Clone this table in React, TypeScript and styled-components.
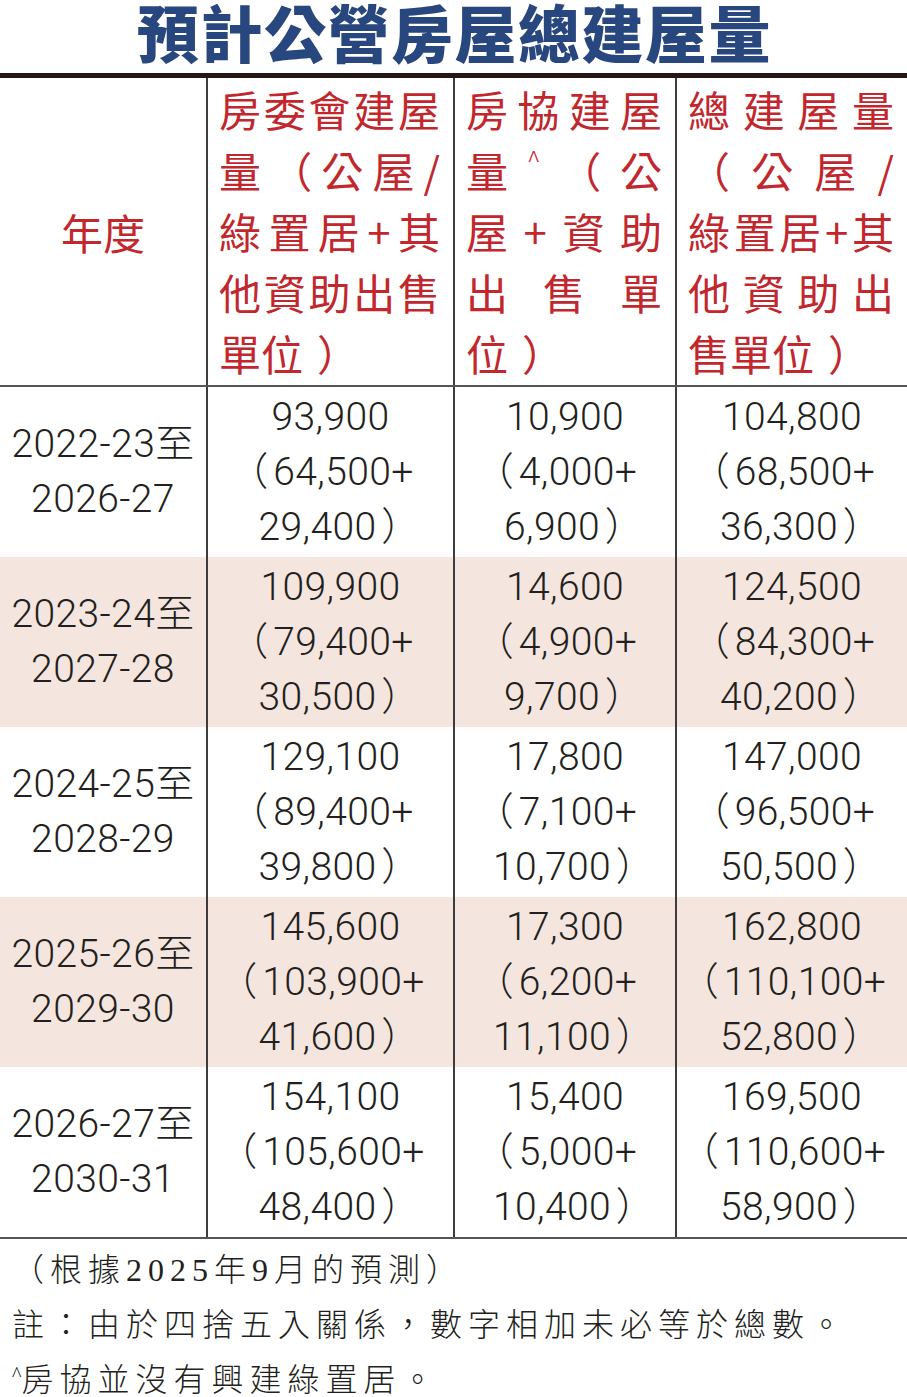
import React from "react";
import styled, { createGlobalStyle } from "styled-components";

const GlobalStyle = createGlobalStyle`
  html, body { margin: 0; padding: 0; background: #ffffff; }
  body { font-family: "Noto Sans CJK TC", "Noto Sans CJK SC", sans-serif; }
`;

const Page = styled.div`
  width: 907px;
  background: #ffffff;
`;

const Title = styled.h1`
  margin: 0;
  height: 73px;
  box-sizing: border-box;
  padding: 0 0 11px 2px;
  text-align: center;
  font-family: "Noto Sans CJK TC", "Noto Sans CJK SC", sans-serif;
  font-weight: 900;
  font-size: 62px;
  line-height: 62px;
  letter-spacing: 1.5px;
  color: #28477f;
  white-space: nowrap;
`;

const Rule = styled.div`
  height: 5px;
  background: #231815;
`;

const Table = styled.div`
  border-bottom: 2px solid #555555;
`;

const Row = styled.div<{ $shaded?: boolean; $head?: boolean }>`
  display: grid;
  grid-template-columns: 206px 247px 222px 1fr;
  box-sizing: border-box;
  height: ${(p) => (p.$head ? "309px" : "170px")};
  border-bottom: ${(p) => (p.$head ? "2px solid #555555" : "none")};
  background: ${(p) => (p.$shaded ? "#f4e6de" : "transparent")};
`;

const Cell = styled.div<{ $first?: boolean }>`
  box-sizing: border-box;
  border-left: ${(p) => (p.$first ? "none" : "2px solid #3d3d3d")};
  display: flex;
  flex-direction: column;
  justify-content: center;
  align-items: center;
`;

const HeadCell = styled.div<{ $first?: boolean }>`
  box-sizing: border-box;
  border-left: ${(p) => (p.$first ? "none" : "2px solid #3d3d3d")};
  display: flex;
  flex-direction: column;
  justify-content: ${(p) => (p.$first ? "center" : "flex-start")};
  align-items: ${(p) => (p.$first ? "center" : "stretch")};
  padding: ${(p) => (p.$first ? "0" : "0 13px 0 11px")};
  color: #c1272d;
  font-family: "Noto Sans CJK TC", "Noto Sans CJK SC", sans-serif;
  font-weight: 400;
  font-size: 42px;
`;

const HeadLine = styled.div<{ $spread?: boolean }>`
  display: flex;
  justify-content: ${(p) => (p.$spread ? "space-between" : "flex-start")};
  align-items: baseline;
  line-height: 61px;
  height: 61px;
  white-space: nowrap;
`;

const HeadGlyph = styled.span<{ $kind?: "close" | "caret" | "plain" }>`
  padding-left: ${(p) => (p.$kind === "close" ? "14px" : "0")};
  font-size: ${(p) => (p.$kind === "caret" ? "26px" : "inherit")};
  font-weight: ${(p) => (p.$kind === "caret" ? 300 : "inherit")};
  align-self: ${(p) => (p.$kind === "caret" ? "flex-start" : "auto")};
  line-height: ${(p) => (p.$kind === "caret" ? "40px" : "inherit")};
`;

const DataLine = styled.div`
  font-family: Roboto, "Noto Sans CJK TC", "Noto Sans CJK SC", sans-serif;
  font-weight: 300;
  font-size: 39px;
  letter-spacing: 0.4px;
  line-height: 55px;
  color: #231f20;
  font-feature-settings: "palt";
  white-space: nowrap;
  text-align: center;
`;

const Paren = styled.span<{ $side: "open" | "close" }>`
  margin-right: ${(p) => (p.$side === "open" ? "6px" : "0")};
  margin-left: ${(p) => (p.$side === "close" ? "6px" : "0")};
`;

const Footer = styled.div`
  padding: 4px 0 0 12px;
`;

const Note = styled.p`
  margin: 0;
  font-family: "Liberation Serif", "Noto Sans CJK TC", "Noto Sans CJK SC", serif;
  font-weight: 300;
  font-size: 32px;
  line-height: 55px;
  letter-spacing: 6px;
  color: #231f20;
  white-space: nowrap;
`;

const Caret = styled.span`
  font-size: 20px;
  line-height: 20px;
  letter-spacing: 0;
  vertical-align: 10px;
`;

type HeadSpec = [string, boolean][];

const headers: HeadSpec[] = [
  [
    ["房委會建屋", true],
    ["量（公屋/", true],
    ["綠置居+其", true],
    ["他資助出售", true],
    ["單位）", false],
  ],
  [
    ["房協建屋", true],
    ["量^（公", true],
    ["屋+資助", true],
    ["出售單", true],
    ["位）", false],
  ],
  [
    ["總建屋量", true],
    ["（公屋/", true],
    ["綠置居+其", true],
    ["他資助出", true],
    ["售單位）", false],
  ],
];

type RowData = { period: [string, string]; values: [string, string, string][] };

const rows: RowData[] = [
  {
    period: ["2022-23至", "2026-27"],
    values: [
      ["93,900", "（64,500+", "29,400）"],
      ["10,900", "（4,000+", "6,900）"],
      ["104,800", "（68,500+", "36,300）"],
    ],
  },
  {
    period: ["2023-24至", "2027-28"],
    values: [
      ["109,900", "（79,400+", "30,500）"],
      ["14,600", "（4,900+", "9,700）"],
      ["124,500", "（84,300+", "40,200）"],
    ],
  },
  {
    period: ["2024-25至", "2028-29"],
    values: [
      ["129,100", "（89,400+", "39,800）"],
      ["17,800", "（7,100+", "10,700）"],
      ["147,000", "（96,500+", "50,500）"],
    ],
  },
  {
    period: ["2025-26至", "2029-30"],
    values: [
      ["145,600", "（103,900+", "41,600）"],
      ["17,300", "（6,200+", "11,100）"],
      ["162,800", "（110,100+", "52,800）"],
    ],
  },
  {
    period: ["2026-27至", "2030-31"],
    values: [
      ["154,100", "（105,600+", "48,400）"],
      ["15,400", "（5,000+", "10,400）"],
      ["169,500", "（110,600+", "58,900）"],
    ],
  },
];

function glyphKind(ch: string): "close" | "caret" | "plain" {
  if (ch === "）") return "close";
  if (ch === "^") return "caret";
  return "plain";
}

function renderData(line: string) {
  const parts = line.split(/(（|）)/).filter((s) => s.length > 0);
  return parts.map((p, i) =>
    p === "（" ? (
      <Paren key={i} $side="open">{p}</Paren>
    ) : p === "）" ? (
      <Paren key={i} $side="close">{p}</Paren>
    ) : (
      <React.Fragment key={i}>{p}</React.Fragment>
    )
  );
}

export default function App() {
  return (
    <Page>
      <GlobalStyle />
      <Title>預計公營房屋總建屋量</Title>
      <Rule />
      <Table>
        <Row $head>
          <HeadCell $first>
            <HeadLine>年度</HeadLine>
          </HeadCell>
          {headers.map((lines, i) => (
            <HeadCell key={i}>
              {lines.map(([text, spread], j) => (
                <HeadLine key={j} $spread={spread}>
                  {Array.from(text).map((ch, k) => (
                    <HeadGlyph key={k} $kind={glyphKind(ch)}>
                      {ch}
                    </HeadGlyph>
                  ))}
                </HeadLine>
              ))}
            </HeadCell>
          ))}
        </Row>
        {rows.map((r, i) => (
          <Row key={i} $shaded={i % 2 === 1}>
            <Cell $first>
              <DataLine>{r.period[0]}</DataLine>
              <DataLine>{r.period[1]}</DataLine>
            </Cell>
            {r.values.map((v, j) => (
              <Cell key={j}>
                {v.map((line, k) => (
                  <DataLine key={k}>{renderData(line)}</DataLine>
                ))}
              </Cell>
            ))}
          </Row>
        ))}
      </Table>
      <Footer>
        <Note>（根據2025年9月的預測）</Note>
        <Note>註：由於四捨五入關係，數字相加未必等於總數。</Note>
        <Note>
          <Caret>^</Caret>房協並沒有興建綠置居。
        </Note>
      </Footer>
    </Page>
  );
}
